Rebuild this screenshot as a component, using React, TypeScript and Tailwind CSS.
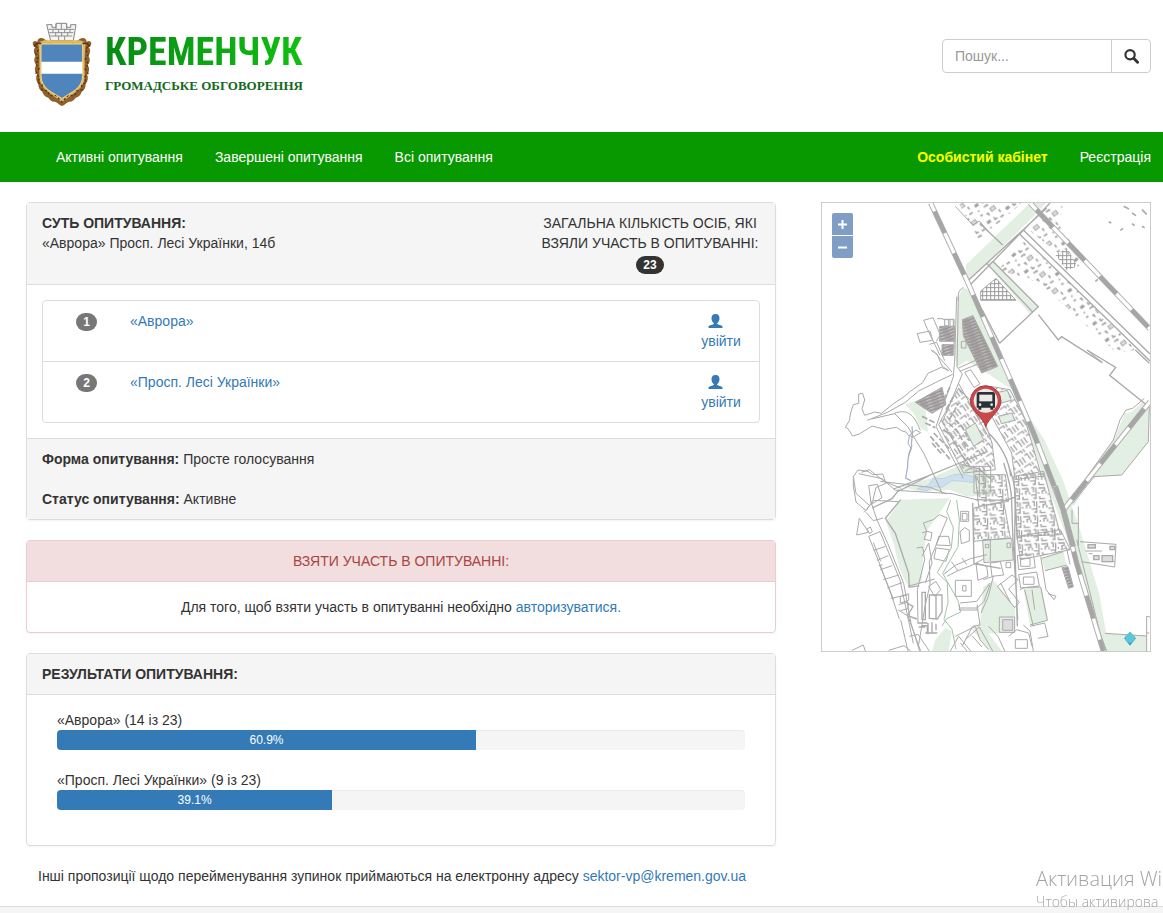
import type { ReactNode } from 'react'

const NAV_LINKS = ['Активні опитування', 'Завершені опитування', 'Всі опитування']

const OPTIONS = [
    { name: '«Аврора»', votes: 14, percent: '60.9%', bar: 60.9 },
    { name: '«Просп. Лесі Українки»', votes: 9, percent: '39.1%', bar: 40 },
]

const TOTAL = 23

function Crest() {
    return (
        <svg viewBox="35 30 186 264" className="h-[88px] w-[62px]" aria-hidden="true">
            {/* mural crown */}
            <path d="M82 44h16v8h12v-12h32v12h12v-8h16l-8 48H94z" fill="#f4f4f4" stroke="#858585" strokeWidth="3" />
            <path d="M88 58h76M90 68h72M93 78h66M110 42v16M142 42v16M126 40v18M101 58v10M118 58v10M136 58v10M152 58v10M109 68v10M127 68v10M145 68v10M118 78v12M136 78v12" stroke="#8d8d8d" strokeWidth="3" fill="none" />
            {/* carved frame */}
            <path
                d="M128 288c-8-2-12-10-21-13-9 1-16-5-20-12-9-1-15-9-18-18-9-4-12-14-12-23-8-9-8-20-4-29-8-8-8-19-2-28-8-9-8-19-2-28-7-9-7-18-1-26-8-4-10-11-6-16 5-4 9-2 12 1 0-12 12-15 22-8 8 6 14 8 23 5h58c9 3 15 1 23-5 10-7 22-4 22 8 3-3 7-5 12-1 4 5 2 12-6 16 6 8 6 17-1 26 6 9 6 20-2 28 6 9 6 20-2 28 4 9 4 20-4 29 0 9-3 19-12 23-3 9-9 17-18 18-4 7-11 13-20 12-9 3-13 11-21 13z"
                fill="#8f5f2e"
            />
            <path d="M57 97l18-6h106l18 6-3 40v66c-4 38-42 50-68 74-26-24-64-36-68-74v-66z" fill="#e0b85a" />
            <path
                d="M50 108l7 12-8 13 9 15-9 14 10 14-9 14 11 13-6 14 14 8-1 15 17 3 6 14 18-1 19 20 19-20 18 1 6-14 17-3-1-15 14-8-6-14 11-13-9-14 10-14-9-14 9-15-8-13 7-12"
                fill="none"
                stroke="#5b3518"
                strokeWidth="4"
                strokeDasharray="7 6"
            />
            <path d="M45 110c4-12 18-14 24-5s20 5 28-3M211 110c-4-12-18-14-24-5s-20 5-28-3" fill="none" stroke="#5b3518" strokeWidth="5" />
            <path d="M65 102h125v94c0 42-36 50-62 70-27-20-63-28-63-70z" fill="#5084bd" stroke="#f2d98b" strokeWidth="3" />
            <path d="M66 155h123v36H66z" fill="#fff" />
        </svg>
    )
}

function UserIcon() {
    return (
        <svg viewBox="0 0 42 42" className="h-[14px] w-[15px]" fill="currentColor" aria-hidden="true">
            <path d="M21 0C12 0 9 6 9 13c0 6 3 12 7 15v2C10 33 0 34 0 38v4h42v-4c0-4-10-5-16-8v-2c4-3 7-9 7-15 0-7-3-13-12-13z" />
        </svg>
    )
}

function SearchIcon() {
    return (
        <svg viewBox="0 0 42 42" className="h-[15px] w-[15px]" fill="none" stroke="#333" aria-hidden="true">
            <circle cx="17" cy="16" r="13" strokeWidth="6" />
            <path d="M27 26l11 11" strokeWidth="8" strokeLinecap="round" />
        </svg>
    )
}

// Block outlines filled with a building pattern
const DENSE_BLOCKS = [
    'M504 550l60 10 45 90 50 170-80 10-10-80-60-110z',
    'M350 665l60-110 70 75 30 90 10 80-95 10z',
    'M455 915l90-20 20 110-110 10z',
    'M575 820l90-15 50 190-130 5z',
    'M460 815l90 0 10 80-90 15z',
    'M585 1000l130-20 30 60-150 30z',
]

const LOOSE_BLOCKS = [
    'M410 0h190L470 110z',
    'M530 200l74-90 140 130 200 200-60 10-230-210z',
    'M650 30l60-30 20 20-30 30 90 130-20 20-150-120z',
]

function CityMap() {
    return (
        <svg viewBox="0 0 984 1344" className="block w-full" fill="none" stroke="#aaa" strokeWidth="3" role="img" aria-label="Карта">
            <defs>
                <pattern id="dense" width="50" height="42" patternUnits="userSpaceOnUse" patternTransform="rotate(-3)">
                    <path d="M4 6h18v8h-7v10M32 4h7v14M46 4v20M6 30v8h16M30 26h15v10h-8M26 16v8M4 18v5" stroke="#a4a4a4" strokeWidth="4" />
                </pattern>
                <pattern id="slanted" width="38" height="46" patternUnits="userSpaceOnUse" patternTransform="rotate(-35)">
                    <path d="M6 3v20M16 3v20M25 3h9v20M4 32h20v8M32 30v12" stroke="#a4a4a4" strokeWidth="4" />
                </pattern>
                <pattern id="houses" width="70" height="62" patternUnits="userSpaceOnUse" patternTransform="rotate(-37)">
                    <path d="M6 8h8M24 14h5v8M62 24v10M12 34h8v5h-8zM36 34v8h8M52 46h12M8 54h5M30 54h12v4" stroke="#a4a4a4" strokeWidth="5" />
                    <path d="M42 6h15v11H42z" fill="#ddd" stroke="#aaa" />
                </pattern>
                <pattern id="garages" width="34" height="9" patternUnits="userSpaceOnUse" patternTransform="rotate(-20)">
                    <path d="M0 4h34" stroke="#979193" strokeWidth="7" />
                    <path d="M4 8h20" stroke="#979193" strokeWidth="2" />
                </pattern>
                <pattern id="grid" width="12" height="12" patternUnits="userSpaceOnUse">
                    <path d="M0 2h12M2 0v12" stroke="#999" strokeWidth="3" />
                </pattern>
            </defs>

            {/* parks and green strips */}
            <g fill="#e4efe3" stroke="none">
                <path d="M431 186L624 0h50L474 200l-38 35z" />
                <path d="M494 181l18-7 137 137-25 22z" />
                <path d="M409 281l15-28 16 9 84 179 55 120-20-8-45-30-80-50-30 20-5-40 5-60z" />
                <path d="M559 551l45 90 60 180 40 100 60 160 40 130 46 133h12l-30-170-60-200-48-140-60-130z" />
                <path d="M814 821l85-5 80-100 3-105-30 30z" />
                <path d="M724 921l75-105 75-105 35-80 20-5 35-30 14 10-80 100-80 100-60 100z" />
                <path d="M235 850l85-22 95-42 80 20 10 70-70 5-50-20-90 5z" />
                <path d="M236 890l148-5-68 96-12 70-5 90-40 11-25-52-20-80-22-64z" />
                <path d="M482 1011l87-5 5 65-88 8z" />
                <path d="M659 1066l65-20 10 40-65 17z" />
                <path d="M604 1156l55-3 20 98-55 15z" />
                <path d="M484 1151l30-20 65 80v80h-90l-15-30z" />
                <path d="M849 1291l125 8v52H855z" />
                <path d="M340 1310l30-35 20 10-10 59h-50z" />
                <path d="M250 605l45-18 15 25 8 75-20-10-25-50z" />
                <path d="M450 1280l55 64h35l-65-85z" />
            </g>

            {/* lake and stream */}
            <path d="M285 857l35-10 15-22 30 2 30-12 25-2 38 8-5 18-25-4-38-2-30 20-25-2-20 12z" fill="#cee0ee" stroke="#bad4e4" />
            <path d="M270 670c5 28-4 38-1 60-9 20-12 40-12 60l-6 35 16 8" stroke="#a7b5ca" strokeWidth="4" />

            {/* housing */}
            {LOOSE_BLOCKS.map((d) => (
                <path key={d} d={d} fill="url(#houses)" stroke="none" />
            ))}
            {DENSE_BLOCKS.map((d, i) => (
                <path key={d} d={d} fill={i < 2 ? 'url(#slanted)' : 'url(#dense)'} />
            ))}
            <path d="M421 350l32-12 74 152-48 20-55-112z" fill="url(#garages)" />
            <path d="M353 370h45v45h-45zM360 425h34v32h-34z" fill="url(#garages)" />
            <path d="M280 598l80-45 12 52-42 26z" fill="url(#garages)" />
            <path d="M476 292v-28l46-38 60 66z" fill="url(#grid)" />
            <path d="M700 155l36-20 30 55-32 12z" fill="url(#grid)" stroke="none" />
            <path d="M720 1094l18-3 16 60-14 5z" fill="url(#garages)" />
            <path d="M430 680l30-20 25 50-30 20z" fill="#e4efe3" />
            <path d="M520 570l36-8 12 30-38 10zM530 640l40-10 8 22-40 10z" fill="#e4efe3" />

            {/* west quarters */}
            <path d="M286 392l38-8 8 28-38 6zM305 352l28-8 22 52-12 18M322 424l22-6 24 55M305 352l12 28 37 77M362 349h34v90M345 347h18M368 350h12v18h-12zM384 350h10v20h-10z" />
            <path d="M326 441l20 14 14 34 20 14M332 441l58 66M380 503l-22-10-40 18-16 28-40 28-16 14-30 20-38 30-20-4-30 10-8-20 8-26-6-20-12 2v28l-16 4-8 24-4 24-12 20 8 4 14 22 20-6 38-24 38 10 36-6 14 10 14 4 10 14-4 20 10 16-8 20M262 697l20-16 14 8-24 14z" />
            <path d="M136 652l60-24 54-30 40-34 60-30 42-20M148 648l70-16 40 40 16 28 32 52 55 120M215 632c40-16 60 0 80 50" />
            <path d="M404 281l-6 190-4 50-52 150 82 155M409 281l-4 210 16 22-60 145 75 126M424 253c-16 10-16 22-15 40M409 540l95 170M410 495l70-32M413 505l70-28M413 560l80 80M428 508l18-8 28 42-18 12zM418 415h14v20h-14z" />
            <path d="M365 590l20-40M372 620l24-42M382 650l28-50M365 680l22 18 28 52 30 42M380 660l26 25 32 56M398 650l22 20 22 44M325 700l60 70M335 690l52 52M330 720l30 34M300 640l40 20M310 660l30 14" strokeWidth="5" strokeDasharray="18 6" />
            <path d="M94 821l14-20 30 4 14 10 30-2 10 28-30 12-10 42-20 28-30-26-8-48zM94 821l8 50 40 36M118 808l24-8 46 36 50 20M140 848l26-4 14 40-32 20zM110 812l70 15 40 35 170 10 80 20M175 835l150 18 50 20" />
            <path d="M215 858l100-38 98-40 82-34M420 785l50 12 35 30M225 867l95-48M150 915l60-28 22-28M236 890l-46 56 30 45 40 120 2 42 30-5" strokeWidth="4" />

            {/* south-west allotments */}
            <path d="M112 946l-8 50 36-8zM135 978l10-6 6 14-8 6zM126 928l30-36 72 4M132 928l22 25 30-8M145 891l20 60 32 70 48 120 22 120 28 90M140 1000l34-14 60 145 40 190" />
            <path d="M155 1042l36-12M165 1072l34-14M170 1088l12-3M175 1100l36-12M184 1130l46-14M196 1155l44-16M206 1186l50-10M235 1180l25-8v20l-25 8zM230 1205l28-8v20l-22 6M176 1075l-22-56M215 1190l-42-104M140 1000l36 90 36 98 20 60M228 1220l28 18M236 1250l22 94M258 1240l40 110M262 1300l26-6 34 50M90 1342l34-16 6 18M200 1342l46-14 20 16" />
            <path d="M300 990l14-5-10-25 30-10 18-15 24 10-54 130 2 70-14 60-20 120M314 985l16 4-4 24-20-4zM350 1000h30l5 28-42-2zM342 1035l40 5-10 35-36-8zM284 1035l18-3 6 38-22 90 2 100M300 1060l20-40 10 60-20 60M258 1150l80-22M320 1150l22-15 14 25-18 20z" />
            <path d="M300 1168h10v82h-10zM322 1176h38v50l-14 22-24-2zM342 1176v70M286 1260h30M300 1268h16v20M318 1260v34M330 1258v34M342 1262v20M255 1200l18 10-16 28 28 10M290 1272h20M310 1290h36" strokeWidth="4" />
            <path d="M386 891l-12 34 20 50-6 60-42 74 30 30 2 60-12 50 24 30 12 60M404 891l8 60-4 80-46 80 46 82 8 34-42 20-14 22" stroke="#a4c4a7" />
            <path d="M416 925h24v30h-24zM421 931h14v20h-14zM414 986l14-12 14 8v32l-24 8zM364 1115l36-28 45-20 50-12M375 1120l30-16 42-16 38-20M388 1076l20 28M420 1065l14 20M400 1132h48v48h-48zM422 1148h10v16h-10zM414 1200l50-5 40-55M414 1215h52l20-20 18-50M412 1205v16h54v-16M466 1210l8 56-22 4-32 60M400 1300l60-30 14 40 26 30" />
            <path d="M385 1344l25-44 36 44M430 1310l42-38 40 72M415 1320l20 24M450 1298l30 34" />

            {/* centre streets */}
            <path d="M452 900l4 182 80 14M460 890l90 2 30-10-2 128 8 260M545 780c20 60 25 90 24 120l4 110 10 160 4 80M560 790c20 50 22 80 20 110l6 110M500 690c30 30 60 70 66 130" strokeWidth="4" />
            <path d="M482 1011l87-5 5 65-88 8zM505 1010v64M490 1024h10v10h-10zM555 1020h10v14h-10zM456 790h50v80h-50zM472 790v80M486 790v80" />
            <path d="M462 1080l32 10 4 30-30 12zM505 1080l30-4 10 40-35 4zM552 1078h14v16h-14zM526 1150l44-34 18 14-28 28 32 40-14 16zM536 1140l30 60M484 1130l30-10-15 60-22 50M532 1242h46v46h-46z" />
            <path d="M542 1250h30v32h-30z" fill="#ddd" />
            <path d="M586 1058l48-6 6 42-50 6zM596 1066h28v24h-28zM590 1115l54-8 8 42-56 6zM604 1122h32v22h-32zM594 1160l12-6 50-2 20 100-52 14M630 1160l8 60M656 1060l16 100 24 30 6-10-24-8M604 1266l20 18 10 60M624 1270l44-10 10 40-30 6M560 1300l24-20 36 10 10 40M580 1310h36v26h-36zM500 1270l28 30 20 44M608 1160l26 110" />
            <path d="M659 1066l65-20M669 1103l66-17M716 1040l18-4 10 48" />
            <path d="M774 1016l108 8-4 68-100-16M790 1044h50M800 1052h12M850 1076h28" />
            <path d="M798 1025h22v10h-22zM864 1030h14v10h-14zM815 1058h16v12h-16zM840 1058h32v18h-32z" fill="#ddd" strokeWidth="4" />

            {/* roads */}
            <path d="M474 62l68 64M436 235L674 15M445 245L684 0M494 181l137 145M512 174l137 137-116 110M649 335l60 76 10-10 122 78" strokeWidth="4" />
            <path d="M533 421l-52-100M795 441l86 52-18 24 110 88M940 441l42 40M604 81l380 372M592 92l392 382" strokeWidth="4" />
            <path d="M841 479l-46-38M814 821l85-5 80-100 3-105M799 816l75-105 20-60 18-30 20-5 35-30M724 921l75-105 18 5-65 80M769 910v120M750 921v40h20M849 1291l125 8M974 1344v-54h8M974 1290v-50l10 2M764 1010l70 280 20 54M400 10l52 56 20-12 30 34" />
            <path d="M905 10l16 8M930 30l12 8M960 20l14 14M860 56l8 4M895 82l8-6M930 62l8 6M960 70l8 4M820 235l8-6" strokeWidth="5" />

            {/* railways */}
            <g strokeLinejoin="round">
                {['M326 0L434 231 579 561 639 701 724 921 764 1081 844 1344', 'M624 0l360 378', 'M984 596L724 921'].map((d) => (
                    <g key={d}>
                        <path d={d} stroke="#b0b0b0" strokeWidth="16" />
                        <path d={d} stroke="#fff" strokeWidth="10" />
                        <path d={d} stroke="#a6a6a6" strokeWidth="13" strokeDasharray="72 66" strokeDashoffset="-28" />
                    </g>
                ))}
                <path d="M700 850l24 71 30 110" strokeWidth="16" />
            </g>
            <path d="M924 1286l18 20-18 22-18-22z" fill="#4a9db3" stroke="none" />
            <path d="M924 1290l14 8v14l-14 9-14-9v-14z" fill="#59c9da" stroke="none" />

            {/* stop marker */}
            <path d="M491 672c-6-28-46-48-46-78a46 46 0 0 1 92 0c0 30-38 50-46 78z" fill="#c9484b" stroke="#a83e42" />
            <circle cx="491" cy="593" r="36" fill="#eee9e4" stroke="none" />
            <path d="M470 567h43c4 0 6 3 6 7v40h-5v6h-9v-6h-27v6h-9v-6h-5v-40c0-4 2-7 6-7z" fill="#263338" stroke="none" />
            <path d="M472 575h39v20h-39z" fill="#eee9e4" stroke="none" />
            <circle cx="474" cy="605" r="4" fill="#eee9e4" stroke="none" />
            <circle cx="509" cy="605" r="4" fill="#eee9e4" stroke="none" />
        </svg>
    )
}

function Badge({ className, children }: { className: string; children: ReactNode }) {
    return (
        <span className={`inline-block rounded-full px-[7px] py-[3px] text-center text-xs leading-3 font-bold text-white ${className}`}>
            {children}
        </span>
    )
}

function Link({ href = '#', children }: { href?: string; children: ReactNode }) {
    return (
        <a href={href} className="text-[#337ab7] hover:underline">
            {children}
        </a>
    )
}

export default function App() {
    return (
        <div className="flex min-h-screen flex-col bg-white font-['Liberation_Sans',Arial,sans-serif] text-sm leading-5 text-[#333]">
            <header className="flex h-[132px] items-start justify-between pr-3 pl-[31px]">
                <a href="#" className="flex items-center gap-3 pt-5">
                    <Crest />
                    <span className="flex flex-col items-start gap-1">
                        <span className="bg-linear-to-r from-[#078a14] to-[#10c010] bg-clip-text font-['Roboto_Condensed',Roboto,sans-serif] text-[38px] leading-10 font-bold text-transparent">
                            КРЕМЕНЧУК
                        </span>
                        <span className="font-['Liberation_Serif',serif] text-[13px] font-bold text-[#14691c]">
                            ГРОМАДСЬКЕ ОБГОВОРЕННЯ
                        </span>
                    </span>
                </a>
                <form className="mt-[39px] flex h-[34px] w-[209px]" onSubmit={(e) => e.preventDefault()}>
                    <input
                        type="text"
                        aria-label="Пошук"
                        placeholder="Пошук..."
                        className="min-w-0 flex-1 rounded-l border border-[#ccc] px-3 placeholder:text-[#999]"
                    />
                    <button type="submit" aria-label="Шукати" className="-ml-px flex w-10 items-center justify-center rounded-r border border-[#ccc] bg-white">
                        <SearchIcon />
                    </button>
                </form>
            </header>

            <nav className="flex justify-between bg-[#089800] py-[15px] pr-3 pl-14 text-white">
                <div className="flex gap-8">
                    {NAV_LINKS.map((label) => (
                        <a key={label} href="#">{label}</a>
                    ))}
                </div>
                <div className="flex gap-8">
                    <a href="#" className="font-bold text-[#ff0]">Особистий кабінет</a>
                    <a href="#">Реєстрація</a>
                </div>
            </nav>

            <div className="flex items-start gap-[45px] pt-5 pr-3 pl-[26px]">
                <main className="min-w-0 flex-1">
                    <section className="mb-5 rounded border border-[#ddd] shadow-xs">
                        <div className="flex justify-between border-b border-[#ddd] bg-[#f5f5f5] px-[15px] py-[10px]">
                            <div>
                                <h1 className="font-bold">СУТЬ ОПИТУВАННЯ:</h1>
                                <p>«Аврора» Просп. Лесі Українки, 14б</p>
                            </div>
                            <div className="w-[220px] text-center">
                                <p>ЗАГАЛЬНА КІЛЬКІСТЬ ОСІБ, ЯКІ ВЗЯЛИ УЧАСТЬ В ОПИТУВАННІ:</p>
                                <div className="flex h-[21px] items-end justify-center">
                                    <Badge className="bg-[#333]">{TOTAL}</Badge>
                                </div>
                            </div>
                        </div>
                        <div className="p-[15px]">
                            <ul className="divide-y divide-[#ddd] rounded border border-[#ddd]">
                                {OPTIONS.map((option, i) => (
                                    <li key={option.name} className="flex items-start px-[15px] py-[10px]">
                                        <div className="flex h-[22px] w-[57px] items-center justify-center">
                                            <Badge className="bg-[#777]">{i + 1}</Badge>
                                        </div>
                                        <div className="flex-1 px-[15px]">
                                            <Link>{option.name}</Link>
                                        </div>
                                        <a href="#" className="flex w-[46px] flex-col items-center text-[#337ab7]">
                                            <span className="flex h-5 items-center pr-3">
                                                <UserIcon />
                                            </span>
                                            <span>увійти</span>
                                        </a>
                                    </li>
                                ))}
                            </ul>
                        </div>
                        <div className="flex flex-col gap-5 border-t border-[#ddd] bg-[#f5f5f5] px-[15px] py-[10px]">
                            <p><b>Форма опитування:</b> Просте голосування</p>
                            <p><b>Статус опитування:</b> Активне</p>
                        </div>
                    </section>

                    <section className="mb-5 rounded border border-[#ebccd1] text-center shadow-xs">
                        <h2 className="border-b border-[#ebccd1] bg-[#f2dede] py-[10px] text-[#a94442]">ВЗЯТИ УЧАСТЬ В ОПИТУВАННІ:</h2>
                        <p className="p-[15px]">
                            Для того, щоб взяти участь в опитуванні необхідно <Link>авторизуватися.</Link>
                        </p>
                    </section>

                    <section className="mb-5 rounded border border-[#ddd] shadow-xs">
                        <h2 className="border-b border-[#ddd] bg-[#f5f5f5] px-[15px] py-[10px] font-bold">РЕЗУЛЬТАТИ ОПИТУВАННЯ:</h2>
                        <div className="px-[30px] py-[15px]">
                            {OPTIONS.map((option) => (
                                <div key={option.name} className="mb-5">
                                    <p>{option.name} ({option.votes} із {TOTAL})</p>
                                    <div className="overflow-hidden rounded bg-[#f5f5f5] inset-shadow-xs">
                                        <div className="bg-[#337ab7] text-center text-xs leading-5 text-white" style={{ width: `${option.bar}%` }}>
                                            {option.percent}
                                        </div>
                                    </div>
                                </div>
                            ))}
                        </div>
                    </section>

                    <p className="pl-3">
                        Інші пропозиції щодо перейменування зупинок приймаються на електронну адресу{' '}
                        <Link href="mailto:sektor-vp@kremen.gov.ua">sektor-vp@kremen.gov.ua</Link>
                    </p>
                </main>

                <aside className="relative w-[330px] shrink-0 border border-[#ccc]">
                    <CityMap />
                    <div className="absolute top-[10px] left-[10px] flex flex-col gap-px text-white">
                        <button aria-label="Збільшити" className="flex h-[22px] w-[21px] items-center justify-center rounded-t-xs bg-[#809dc5]">
                            <svg viewBox="0 0 9 9" className="h-[9px] w-[9px]" stroke="currentColor" strokeWidth="2" aria-hidden="true">
                                <path d="M0 4.5h9M4.5 0v9" />
                            </svg>
                        </button>
                        <button aria-label="Зменшити" className="flex h-[22px] w-[21px] items-center justify-center rounded-b-xs bg-[#809dc5]">
                            <svg viewBox="0 0 9 9" className="h-[9px] w-[9px]" stroke="currentColor" strokeWidth="2" aria-hidden="true">
                                <path d="M0 4.5h9" />
                            </svg>
                        </button>
                    </div>
                </aside>
            </div>

            <footer className="mt-5 flex-1 border-t border-[#ddd] bg-[#f5f5f5]" />

            <div className="pointer-events-none fixed right-0 bottom-0 w-[127px] font-['Open_Sans',sans-serif] font-light whitespace-nowrap text-[#a3a3a3]">
                <p className="text-xl leading-6">Активация Wi</p>
                <p className="text-sm leading-[22px]">Чтобы активирова</p>
            </div>
        </div>
    )
}
